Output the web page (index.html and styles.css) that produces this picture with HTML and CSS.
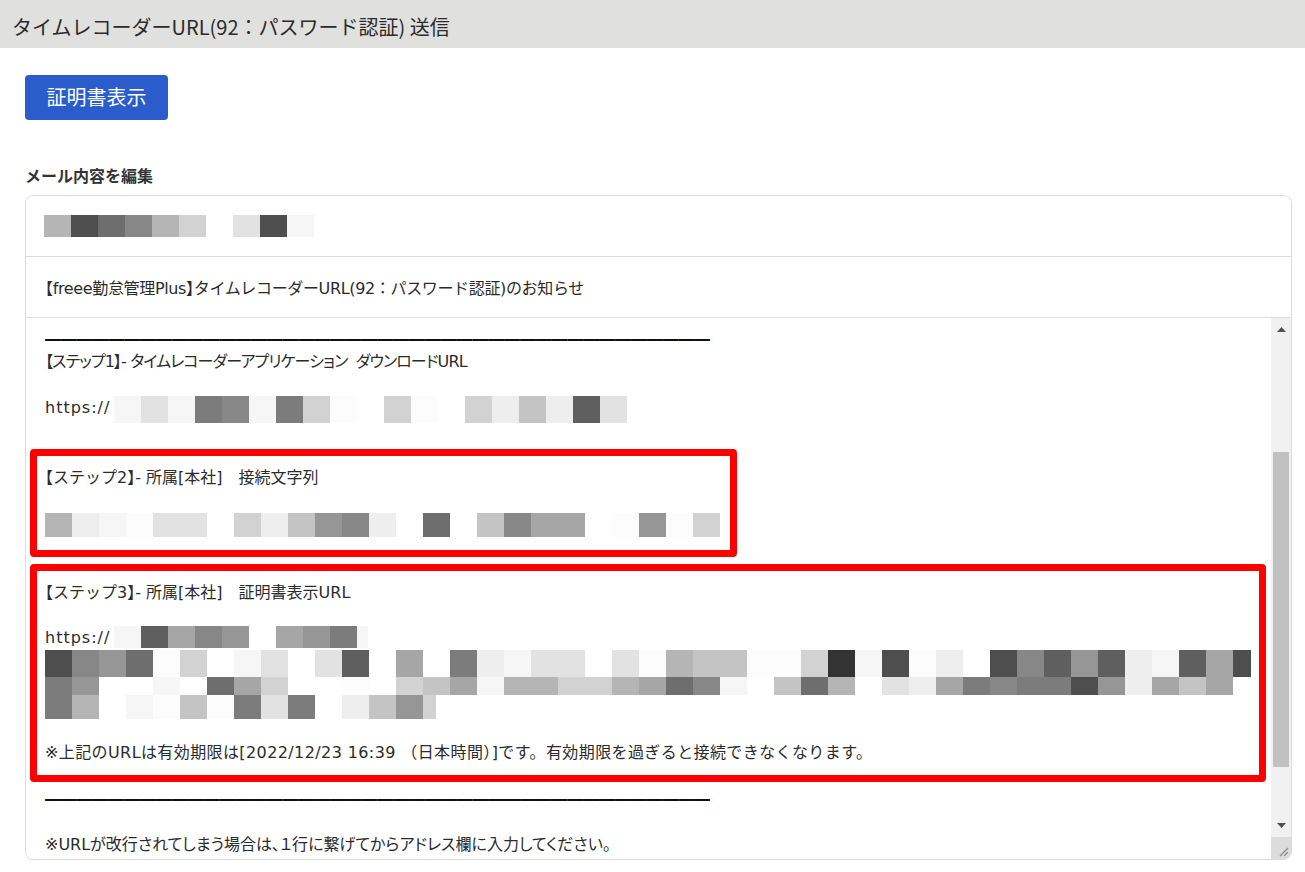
FILE: index.html
```html
<!DOCTYPE html>
<html lang="ja">
<head>
<meta charset="utf-8">
<title>タイムレコーダーURL送信</title>
<link rel="stylesheet" href="styles.css">
</head>
<body>
<header class="titlebar">
  <h1 class="title">タイムレコーダーURL(92：パスワード認証) 送信</h1>
</header>
<main class="page">
  <button class="btn-primary" type="button">証明書表示</button>
  <h2 class="section-label">メール内容を編集</h2>
  <div class="mail-card">
    <div class="mail-row to-row">
      <div class="mosaic mz-to"><i class="k8"></i><i class="k1"></i><i class="k3"></i><i class="k5"></i><i class="k8"></i><i class="ka"></i><i class="kf"></i><i class="kb"></i><i class="k1"></i><i class="kd"></i></div>
    </div>
    <div class="mail-row subject-row mailfont"><span class="hw">【</span>freee勤怠管理Plus<span class="hw">】</span>タイムレコーダーURL(92：パスワード認証)のお知らせ</div>
    <div class="mail-body">
      <div class="body-text mailfont">
        <div class="ln rule">――――――――――――――――――――――――――――――――――――――――――</div>
        <div class="ln prop tight">【ステップ1】- タイムレコーダーアプリケーション  ダウンロードURL</div>
        <div class="ln"></div>
        <div class="ln url-line"><span class="proto">https://</span><span class="mosaic mz-s1"><i class="kd"></i><i class="kb"></i><i class="kd"></i><i class="k4"></i><i class="k5"></i><i class="kd"></i><i class="k4"></i><i class="ka"></i><i class="ke"></i><i class="kf"></i><i class="ka"></i><i class="ke"></i><i class="kf"></i><i class="ka"></i><i class="kc"></i><i class="k9"></i><i class="kc"></i><i class="k2"></i><i class="kb"></i></span></div>
        <div class="ln"></div>
        <div class="ln"></div>
        <div class="ln"><span class="hw">【</span>ステップ2<span class="hw">】</span>- 所属[本社]　接続文字列</div>
        <div class="ln"></div>
        <div class="ln"><div class="mosaic mz-s2"><i class="k8"></i><i class="kc"></i><i class="kd"></i><i class="ke"></i><i class="kb"></i><i class="kb"></i><i class="kf"></i><i class="ka"></i><i class="kc"></i><i class="k9"></i><i class="k6"></i><i class="k5"></i><i class="kc"></i><i class="kf"></i><i class="k3"></i><i class="kf"></i><i class="k9"></i><i class="k5"></i><i class="k7"></i><i class="k7"></i><i class="kf"></i><i class="ke"></i><i class="k6"></i><i class="ke"></i><i class="ka"></i></div></div>
        <div class="ln"></div>
        <div class="ln"></div>
        <div class="ln"><span class="hw">【</span>ステップ3<span class="hw">】</span>- 所属[本社]　証明書表示URL</div>
        <div class="ln"></div>
        <div class="ln url-line"><span class="proto">https://</span><span class="mosaic mz-s3u"><i class="kd"></i><i class="k2"></i><i class="k7"></i><i class="k5"></i><i class="k6"></i><i class="kf"></i><i class="k7"></i><i class="k6"></i><i class="k4"></i><i class="kd w11"></i></span></div>
        <div class="mz-block">
          <div class="mosaic r27"><i class="k1"></i><i class="k5"></i><i class="k6"></i><i class="k3"></i><i class="ke"></i><i class="ka"></i><i class="kf"></i><i class="kd"></i><i class="kb"></i><i class="kf"></i><i class="kb"></i><i class="k2"></i><i class="kf"></i><i class="k7"></i><i class="kf"></i><i class="k4"></i><i class="kc"></i><i class="kd"></i><i class="kb"></i><i class="kb"></i><i class="kf"></i><i class="kb"></i><i class="ke"></i><i class="k8"></i><i class="k9"></i><i class="k9"></i><i class="ke"></i><i class="ke"></i><i class="ka"></i><i class="k0"></i><i class="kd"></i><i class="k1"></i><i class="ke"></i><i class="kc"></i><i class="kf"></i><i class="k1"></i><i class="k5"></i><i class="k2"></i><i class="k6"></i><i class="k2"></i><i class="kc"></i><i class="kd"></i><i class="k2"></i><i class="k7"></i><i class="k1 w18"></i></div>
          <div class="mosaic r18"><i class="k4"></i><i class="k6"></i><i class="kf"></i><i class="kf"></i><i class="kd"></i><i class="kf"></i><i class="k3"></i><i class="k7"></i><i class="ka"></i><i class="kf"></i><i class="kf"></i><i class="ke"></i><i class="kf"></i><i class="ka"></i><i class="k9"></i><i class="k7"></i><i class="kd"></i><i class="k8"></i><i class="k8"></i><i class="ka"></i><i class="ka"></i><i class="k8"></i><i class="k7"></i><i class="k3"></i><i class="k5"></i><i class="kd"></i><i class="kf"></i><i class="k9"></i><i class="k3"></i><i class="k8"></i><i class="kf"></i><i class="kb"></i><i class="kc"></i><i class="k7"></i><i class="k4"></i><i class="k5"></i><i class="k4"></i><i class="k4"></i><i class="k1"></i><i class="k6"></i><i class="kc"></i><i class="k7"></i><i class="k9"></i><i class="k7"></i></div>
          <div class="mosaic r24"><i class="k4"></i><i class="k8"></i><i class="kf"></i><i class="kd"></i><i class="ke"></i><i class="k9"></i><i class="ke"></i><i class="k4"></i><i class="kb"></i><i class="k4"></i><i class="kf"></i><i class="kc"></i><i class="k9"></i><i class="k6"></i><i class="ka w13"></i></div>
        </div>
        <div class="ln"></div>
        <div class="ln note">※上記のURLは有効期限は[2022/12/23 16:39 （日本時間）]です。有効期限を過ぎると接続できなくなります。</div>
        <div class="ln"></div>
        <div class="ln rule">――――――――――――――――――――――――――――――――――――――――――</div>
        <div class="ln"></div>
        <div class="ln prop">※URLが改行されてしまう場合は、１行に繋げてからアドレス欄に入力してください。</div>

        <div class="mark mark-1"></div>
        <div class="mark mark-2"></div>
      </div>
      <div class="scrollbar">
        <div class="sb-btn"><svg width="9" height="5" viewBox="0 0 9 5"><polygon points="0,5 4.5,0 9,5" fill="#505050"/></svg></div>
        <div class="sb-track"><div class="sb-thumb"></div></div>
        <div class="sb-btn"><svg width="9" height="5" viewBox="0 0 9 5"><polygon points="0,0 9,0 4.5,5" fill="#505050"/></svg></div>
        <div class="sb-corner"><svg width="12" height="12" viewBox="0 0 12 12"><path d="M11 3 L3 11 M11 7 L7 11" stroke="#8a8a8a" stroke-width="1.2" fill="none"/></svg></div>
      </div>
    </div>
  </div>
</main>
</body>
</html>
```

FILE: styles.css
```css
* { box-sizing: border-box; }
html, body { margin: 0; padding: 0; }
body {
  width: 1305px;
  height: 872px;
  overflow: hidden;
  background: #fff;
  color: #333;
  font-family: "Noto Sans CJK JP", sans-serif;
}

.titlebar {
  height: 48px;
  background: #e0e0de;
  display: flex;
  align-items: center;
  padding: 5px 12px 0;
}
.title {
  margin: 0;
  font-size: 20px;
  font-weight: 400;
  line-height: 1;
  color: #2b2b2b;
}

.page { padding: 27px 13px 0 25px; }

.btn-primary {
  display: block;
  width: 143px;
  height: 45px;
  padding: 0 0 2px;
  border: 0;
  border-radius: 4px;
  background: #2b5ccc;
  color: #fff;
  font-family: "Noto Sans CJK JP", sans-serif;
  font-size: 20px;
  line-height: 43px;
}

.section-label {
  margin: 43px 0 8px;
  font-size: 16px;
  font-weight: 700;
  line-height: 24px;
  color: #333;
}

.mail-card {
  border: 1px solid #ddd;
  border-radius: 8px;
  overflow: hidden;
}
.mail-row {
  height: 61px;
  border-bottom: 1px solid #ddd;
  padding: 0 18px;
}
.to-row { padding-top: 19px; }
.subject-row {
  display: flex;
  align-items: center;
  padding-left: 19px;
  white-space: pre;
  letter-spacing: -0.35px;
}

.mailfont {
  font-family: "DejaVu Sans", "Noto Sans CJK JP", sans-serif;
  font-size: 16px;
  color: #2b2b2b;
}
.hw { font-family: "Noto Sans CJK JP", sans-serif; font-feature-settings: "halt"; }
.prop { font-feature-settings: "palt"; }
.tight { letter-spacing: -0.9px; }
.note { letter-spacing: 0.4px; }

.mail-body {
  display: flex;
  height: 541px;
}
.body-text {
  flex: 1;
  position: relative;
  overflow: hidden;
  padding: 8.5px 0 0 19px;
}
.ln {
  height: 23px;
  line-height: 23px;
  white-space: pre;
}
.rule {
  font-family: "DejaVu Sans", sans-serif;
  font-weight: 700;
  letter-spacing: -0.17px;
  color: #111;
}
.url-line { display: flex; }
.proto { flex: none; width: 69px; letter-spacing: 1px; }

.mosaic { display: flex; }
.mosaic i { flex: none; width: 27px; display: block; }
.mosaic i.w11 { width: 11px; }
.mosaic i.w13 { width: 13px; }
.mosaic i.w18 { width: 18px; }
.mz-to i { height: 22px; }
.mz-s1 i { height: 27px; }
.mz-s2 { padding-top: 2.5px; }
.mz-s2 i { height: 24px; }
.mz-s3u { padding-top: 0.5px; }
.mz-s3u i { height: 22px; }
.mz-block { height: 69px; padding-top: 1.5px; }
.r27 i { height: 27px; }
.r18 i { height: 18px; }
.r24 i { height: 24px; }

.k0 { background: #333333; }
.k1 { background: #4e4e4e; }
.k2 { background: #5f5f5f; }
.k3 { background: #6e6e6e; }
.k4 { background: #7c7c7c; }
.k5 { background: #878787; }
.k6 { background: #969696; }
.k7 { background: #a6a6a6; }
.k8 { background: #b5b5b5; }
.k9 { background: #c4c4c4; }
.ka { background: #d2d2d2; }
.kb { background: #e2e2e2; }
.kc { background: #eeeeee; }
.kd { background: #f6f6f6; }
.ke { background: #fcfcfc; }
.kf { background: #ffffff; }

.mark {
  position: absolute;
  border: 7px solid #ff0000;
  border-radius: 4px;
  pointer-events: none;
}
.mark-1 { left: 4px; top: 131px; width: 707px; height: 108px; }
.mark-2 { left: 4px; top: 246px; width: 1236px; height: 218px; }

.scrollbar {
  flex: none;
  width: 20px;
  display: flex;
  flex-direction: column;
  background: #f1f1f1;
}
.sb-btn {
  height: 23px;
  display: flex;
  align-items: center;
  justify-content: center;
}
.sb-track { flex: 1; padding-top: 111px; }
.sb-thumb { height: 315px; margin: 0 2px; background: #c1c1c1; }
.sb-corner {
  height: 22px;
  background: #dcdcdc;
  display: flex;
  align-items: flex-end;
  justify-content: flex-end;
  padding: 0 2px 2px 0;
}
```
